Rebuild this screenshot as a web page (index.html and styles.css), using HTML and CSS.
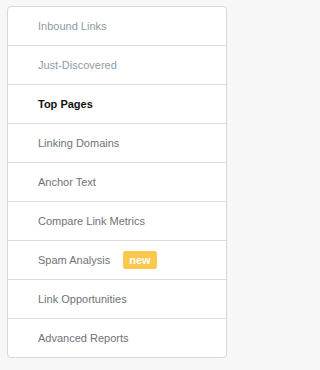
FILE: index.html
```html
<!DOCTYPE html>
<html>
<head>
<meta charset="utf-8">
<link rel="stylesheet" href="styles.css">
</head>
<body>
<nav class="menu">
  <a class="item muted">Inbound Links</a>
  <a class="item muted">Just-Discovered</a>
  <a class="item active">Top Pages</a>
  <a class="item">Linking Domains</a>
  <a class="item">Anchor Text</a>
  <a class="item">Compare Link Metrics</a>
  <a class="item">Spam Analysis <span class="badge">new</span></a>
  <a class="item">Link Opportunities</a>
  <a class="item">Advanced Reports</a>
</nav>
</body>
</html>
```
FILE: styles.css
```css
html, body {
  margin: 0;
  padding: 0;
  background: #f7f7f7;
}
body {
  padding: 6px 0 0 7px;
  font-family: "Liberation Sans", Arial, sans-serif;
}
.menu {
  width: 218px;
  background: #fff;
  border: 1px solid #d8d8d8;
  border-radius: 4px;
  display: flex;
  flex-direction: column;
}
.item {
  height: 38px;
  display: flex;
  align-items: center;
  padding-left: 30px;
  font-size: 11px;
  color: #6f7377;
  border-bottom: 1px solid #dcdcdc;
}
.item:last-child {
  border-bottom: none;
}
.item.muted {
  color: #8f9aa7;
}
.item.active {
  color: #111;
  font-weight: bold;
}
.badge {
  margin-left: 13px;
  height: 18px;
  padding: 0 6px;
  display: inline-flex;
  align-items: center;
  background: #f8c94b;
  color: #fff;
  font-weight: bold;
  font-size: 11px;
  border-radius: 3px;
}
```
